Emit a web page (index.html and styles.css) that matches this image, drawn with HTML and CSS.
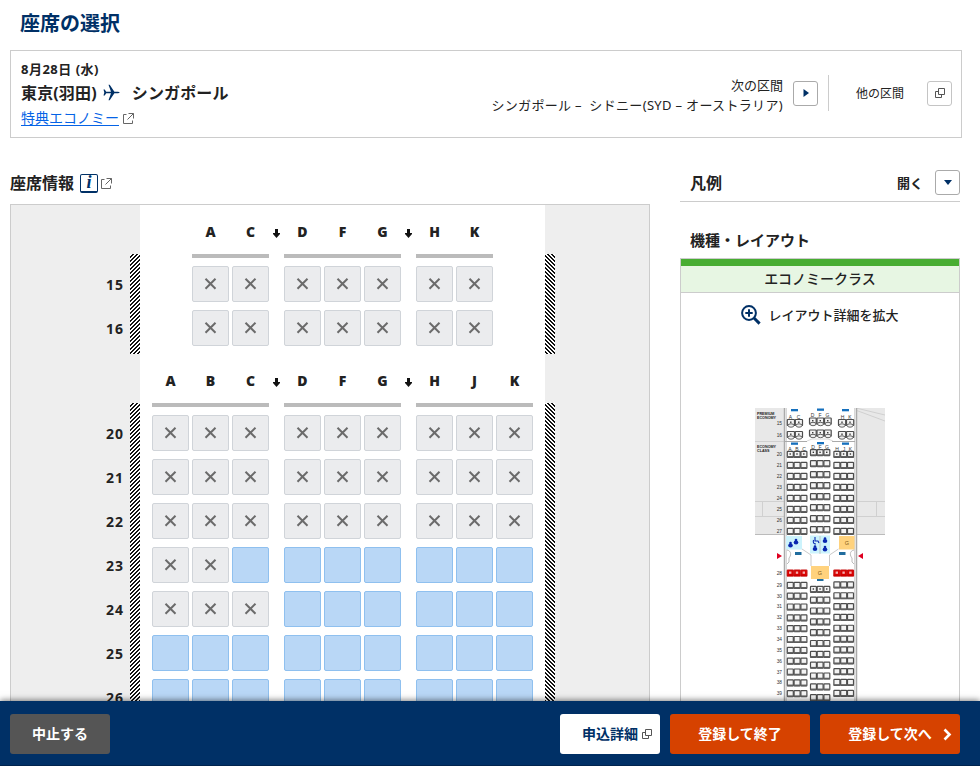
FILE: index.html
```html
<!DOCTYPE html>
<html lang="ja">
<head>
<meta charset="utf-8">
<title>座席の選択</title>
<link rel="stylesheet" href="styles.css">
</head>
<body>
<svg class="defs" width="0" height="0" aria-hidden="true">
  <symbol id="ext" viewBox="0 0 11 11"><path d="M3.500 1.500h-3v9h9v-3M5.500 .5h5v5M10.500 .5L4.500 6.500" fill="none" stroke="#666"/></symbol>
  <symbol id="win" viewBox="0 0 10 10"><path d="M3.500 .5h6v6h-6zM3.500 3.500h-3v6h6v-3" fill="none" stroke="#555"/></symbol>
</svg>
<main class="content">
  <h1>座席の選択</h1>
  <section class="flight">
    <div class="route">
      <p class="date">8月28日 (水)</p>
      <p class="cities"><span>東京(羽田)</span><svg class="plane" viewBox="0 0 17 17"><path d="M.5 5.500h1.200L3.200 7.800h4.800L5.500.8h1.200l4.700 7h3.400q1.600.2 1.900.7-.3.500-1.900.8h-3.400l-4.700 7H5.500L8 9.300H3.200L1.700 11.600H.5l.8-3.100z" fill="#003066"/></svg><span>シンガポール</span></p>
      <p class="fare"><a href="#">特典エコノミー</a><svg width="11" height="11"><use href="#ext"/></svg></p>
    </div>
    <div class="next"><p>次の区間</p><p class="segment">シンガポール –&nbsp; シドニー(SYD – オーストラリア)</p></div>
    <button class="square"><svg width="6" height="8"><path d="M.5 0l5.500 4L.5 8z" fill="#003066"/></svg></button>
    <div class="divider"></div>
    <span class="others">他の区間</span>
    <button class="square light"><svg width="10" height="10"><use href="#win"/></svg></button>
  </section>
  <div class="columns">
    <section class="seats">
      <h2>座席情報 <span class="info">i</span><svg width="11" height="11"><use href="#ext"/></svg></h2>
      <div class="map" id="map"></div>
    </section>
    <aside>
      <div class="legend"><h2>凡例</h2><span>開く</span><button class="square"><svg width="8" height="5"><path d="M0 0h8L4 5z" fill="#003066"/></svg></button></div>
      <h3>機種・レイアウト</h3>
      <div class="layout">
        <div class="cabin-class">エコノミークラス</div>
        <div class="enlarge"><svg width="20" height="20" viewBox="0 0 20 20"><g fill="none" stroke="#003066"><circle cx="8" cy="8" r="6.900" stroke-width="2"/><path d="M8 4.300v7.400M4.300 8h7.400" stroke-width="2"/><path d="M13 13l5.600 5.600" stroke-width="3"/></g></svg><span>レイアウト詳細を拡大</span></div>
        <svg class="plan" id="plan" width="130" height="293" viewBox="755 408 130 293"></svg>
      </div>
    </aside>
  </div>
</main>
<footer>
  <button class="cancel">中止する</button>
  <button class="details">申込詳細<svg width="10" height="10"><use href="#win"/></svg></button>
  <button class="primary">登録して終了</button>
  <button class="primary">登録して次へ<svg class="chevron" width="9" height="13"><path d="M1.500 1.500l5 5-5 5" fill="none" stroke="#fff" stroke-width="2.600"/></svg></button>
</footer>
<script src="seats.js"></script>
</body>
</html>
```
FILE: styles.css
```css
* { box-sizing: border-box; margin: 0; padding: 0; }
body { height: 766px; display: flex; flex-direction: column; overflow: hidden; background: #fff; color: #222; font: 13px/20px "Noto Sans", "Noto Sans CJK JP", sans-serif; }
.defs { position: absolute; }
button { font: inherit; }
.content { flex: 1; min-height: 0; overflow: hidden; padding: 0 18px 0 10px; }
h1 { height: 50px; padding: 10px 0 0 10px; font-size: 20px; line-height: 28px; color: #003066; }
.flight { display: flex; align-items: center; height: 88px; border: 1px solid #ccc; padding: 0 9px 2px 10px; }
.route { flex: 1; padding-top: 2px; }
.date { font-weight: bold; line-height: 21px; letter-spacing: .5px; }
.cities { display: flex; align-items: center; font-size: 16px; line-height: 26px; font-weight: bold; letter-spacing: .15px; }
.plane { width: 17px; height: 17px; margin: 0 12px 0 6px; }
.fare { display: flex; align-items: center; gap: 4px; font-size: 14px; line-height: 24px; }
.fare svg { margin-top: 2px; }
a { color: #0563e6; text-underline-offset: 2px; }
.next { text-align: right; margin-right: 10px; padding-top: 4px; }
.segment { white-space: nowrap; letter-spacing: .33px; }
.square { display: flex; align-items: center; justify-content: center; flex: none; width: 25px; height: 25px; background: #fff; border: 1px solid #aaa; border-radius: 3px; }
.square.light { border-color: #c4c4c4; }
.divider { width: 1px; height: 36px; margin: 0 27px 0 10px; background: #ccc; }
.others { width: 71px; padding-top: 2px; font-size: 12px; }
.columns { display: flex; gap: 30px; padding-top: 32px; }
.seats { width: 640px; }
h2 { font-size: 16px; line-height: 24px; }
.seats h2 { display: flex; align-items: center; height: 34px; padding-bottom: 8px; }
.info { width: 18px; height: 19px; margin: 0 3px 0 6px; border: 1px solid #003066; border-bottom-width: 2px; border-radius: 2px; font: italic bold 18px/14px "Liberation Serif", serif; text-align: center; color: #003066; }
.map { border: 1px solid #ccc; background: #eee; }
.block { display: grid; grid-template-columns: 119px 10px 405px 10px; grid-template-rows: 49px auto; }
.letters, .rows { grid-column: 3; padding: 0 12px; background: #fff; }
.letters { display: flex; align-items: center; padding-top: 4px; font-size: 14px; font-weight: bold; }
.group { display: flex; gap: 3px; width: 117px; }
.group.end { justify-content: flex-end; }
.group b { width: 37px; text-align: center; }
.aisle { width: 15px; display: flex; justify-content: center; padding-top: 4px; }
.numbers { grid-row: 2; grid-column: 1; padding: 12px 6px 0 0; text-align: right; font-size: 14px; font-weight: bold; letter-spacing: 1px; }
.numbers div { height: 44px; line-height: 38px; }
.hatch { grid-row: 2; grid-column: 2; background: url("data:image/svg+xml,%3Csvg xmlns='http://www.w3.org/2000/svg' width='4' height='4' shape-rendering='crispEdges'%3E%3Cpath fill='%23fff' d='M0 0h4v4H0z'/%3E%3Cpath fill='%23111' d='M2 0h2v1H2zM1 1h2v1H1zM0 2h2v1H0zM0 3h1v1H0zM3 3h1v1H3z'/%3E%3C/svg%3E"); }
.hatch.right { grid-column: 4; transform: scaleX(-1); }
.rows { grid-row: 2; }
.row { display: flex; gap: 15px; padding-bottom: 8px; }
.bar { height: 4px; background: #bbb; }
.rails { display: flex; gap: 15px; height: 12px; }
.short { width: 77px; }
.first.short { margin-left: 40px; }
.rails .bar { width: 117px; }
.rails .bar.short { width: 77px; }
.seat { display: flex; align-items: center; justify-content: center; width: 37px; height: 36px; border: 1px solid #d0d4d9; border-radius: 2px; background: #ebecee; }
.seat.open { background: #b9d7f6; border-color: #8fc0ef; }
aside { width: 280px; }
.legend { display: flex; align-items: center; height: 32px; border-bottom: 1px solid #ccc; padding: 0 0 6px 10px; }
.legend h2 { flex: 1; }
.legend span { font-weight: bold; margin-right: 12px; }
h3 { height: 56px; padding: 26px 0 0 10px; font-size: 15px; line-height: 24px; }
.layout { height: 480px; border: 1px solid #ccc; text-align: center; }
.cabin-class { height: 34px; border-top: 7px solid #48ad32; border-bottom: 1px solid #ccc; background: #e7f6e3; font-size: 14px; line-height: 26px; font-weight: 500; }
.enlarge { display: flex; justify-content: center; align-items: center; height: 44px; gap: 7px; font-weight: 500; }
.plan { display: block; margin: 71px auto 0 74px; }
footer { position: relative; display: flex; gap: 10px; height: 65px; padding: 13px 20px 0 10px; background: #003066; border-bottom: 1px solid #00244e; box-shadow: 0 -1px 6px rgba(0,0,0,.5); }
footer button { display: flex; align-items: center; justify-content: center; height: 40px; border: 0; border-radius: 3px; font-size: 14px; font-weight: bold; color: #fff; }
.cancel { width: 100px; margin-right: auto; background: #555; }
.details { width: 100px; padding-left: 14px; gap: 4px; background: #fff; }
footer .details { color: #003066; }
.primary { width: 140px; background: #d64200; }
.primary .chevron { margin: 0 -20px 0 11px; }
```
FILE: seats.js
```js
const cross = '<svg width="13" height="13"><path d="M1.500 .7l10 10M11.500 .7L1.500 10.700" stroke="#6b6b6b" stroke-width="2"/></svg>';
const arrow = '<div class="aisle"><svg width="7" height="9"><path d="M2 0h3v4h2v1L3.500 9 0 5V4h2z" fill="#111"/></svg></div>';

// x = taken, o = open; groups are separated by aisles
const blocks = [
  { letters: ['AC', 'DFG', 'HK'], rows: [[15, 'xx xxx xx'], [16, 'xx xxx xx']] },
  { letters: ['ABC', 'DFG', 'HJK'], rows: [
    [20, 'xxx xxx xxx'], [21, 'xxx xxx xxx'], [22, 'xxx xxx xxx'], [23, 'xxo ooo ooo'],
    [24, 'xxx ooo ooo'], [25, 'ooo ooo ooo'], [26, 'ooo ooo ooo']] }
];
const group = (items, i) => `<div class="group${i ? '' : ' end'}">${items}</div>`;
document.getElementById('map').innerHTML = blocks.map(b => {
  const letters = b.letters.map((g, i) => group([...g].map(c => `<b>${c}</b>`).join(''), i)).join(arrow);
  const rails = b.letters.map((g, i) => `<div class="bar${g.length < 3 ? ' short' : ''}${i ? '' : ' first'}"></div>`).join('');
  const rows = b.rows.map(r => `<div class="row">${r[1].split(' ').map((g, i) =>
    group([...g].map(c => c === 'x' ? `<div class="seat">${cross}</div>` : '<div class="seat open"></div>').join(''), i)).join('')}</div>`).join('');
  return `<div class="block"><div class="letters">${letters}</div>
    <div class="numbers">${b.rows.map(r => `<div>${r[0]}</div>`).join('')}</div>
    <div class="hatch"></div><div class="rows"><div class="rails">${rails}</div>${rows}</div><div class="hatch right"></div></div>`;
}).join('');

// Miniature cabin plan
let s = '';
const rect = (x, y, w, h, f, extra = '') => { s += `<rect x="${x}" y="${y}" width="${w}" height="${h}" fill="${f}" ${extra}/>`; };
const path = (d, c, f = 'none', w = 1) => { s += `<path d="${d}" stroke="${c}" fill="${f}" stroke-width="${w}"/>`; };
const text = (x, y, t, size = 5, anchor = 'middle', f = '#333', w = 400) => {
  s += `<text x="${x}" y="${y}" font-size="${size}" text-anchor="${anchor}" fill="${f}" font-weight="${w}" font-family="Liberation Sans">${t}</text>`;
};
const trio = (x, cy, n = 3, w = 6.800, red = false, dots = false) => {
  for (let i = 0; i < n; i++) {
    const l = x + i * w;
    rect(l + .5, cy - 3, w - .8, 6, red ? '#d00' : '#f4f4f4', `stroke="${red ? '#c81010' : '#4c4c4c'}" stroke-width="1.200" rx=".6"`);
    rect(l + .3, cy + 1.700, w - .6, 1.600, red ? '#c00' : '#606060');
    if (red) { rect(l + 2.200, cy - 1.500, w - 4.400, 2.300, '#f3b0b0'); }
    if (dots) { rect(l + w / 2 - .7, cy - 1, 1.400, 1.400, '#333'); }
  }
};
rect(755, 408, 130, 127, '#e8e8e8');
path('M755 441.500h30M755 501.500h30M755 516.500h30M762.500 501v16M856 501.500h29M856 516.500h29M876.500 501v16M850 408l35 13M856 408l29 7', '#d0d0d0');
path('M755 534.500h30M856 534.500h29', '#bbb');
rect(784, 408, 73, 300, '#f4f4f4');
rect(787, 408, 67, 300, '#fff');
path('M784.500 408v300M856.500 408v300', '#aaa', 'none', 1.500);
path('M786.500 408v300M854.500 408v300', '#d8d8d8');
path('M785 441.500h22M832 441.500h23', '#aaa');
path('M807 441l5-2h16l5 2', '#ccc', 'none', .7);
[['PREMIUM', 414.500], ['ECONOMY', 418.500], ['ECONOMY', 447.500], ['CLASS', 451.500]].forEach(t => text(757, t[1], t[0], 3.700, 'start', '#222', 700));
[[791, 409], [817, 408.500], [842, 409], [791, 442.500], [817, 442], [842, 442.500]].forEach(p => rect(p[0], p[1], 7, 2.300, '#1670bd'));
[['A', 790.500, 418.500], ['C', 798.500, 418.500], ['D', 812.500, 416.500], ['F', 820, 416.500], ['G', 827.500, 416.500], ['H', 842.500, 418.500], ['K', 850, 418.500],
 ['A', 790, 450.500], ['B', 797, 450.500], ['C', 804, 450.500], ['D', 813, 448.500], ['F', 820, 448.500], ['G', 827, 448.500], ['H', 837, 450.500], ['J', 844, 450.500], ['K', 850.500, 450.500]
].forEach(l => text(l[1], l[2], l[0]));
[[15, 422.500], [16, 434.500]].forEach(([n, y]) => {
  text(782, y + 2, n, 4.800, 'end');
  trio(786.800, y, 2, 8, false, true); trio(809, y - 1.500, 3, 7.500, false, true); trio(838, y, 2, 8, false, true);
  for (const x of [791, 799, 813, 820.500, 828, 842, 850]) s += `<ellipse cx="${x}" cy="${y + (x > 810 && x < 830 ? 1.500 : 3)}" rx="3" ry="1.700" fill="#eee" stroke="#555" stroke-width=".9"/>`;
});
for (let n = 20; n < 28; n++) {
  const y = 454.300 + (n - 20) * 11;
  text(782, y + 2, n, 4.800, 'end');
  trio(786.800, y, 3, 6.800, false, n === 20); trio(810, y - 1.700, 3, 6.700, false, n === 20); trio(833.400, y, 3, 6.800, false, n === 20);
}
rect(786, 536, 16, 13.500, '#ccf3fc');
rect(810, 535.500, 20, 18, '#ccf3fc');
rect(839, 536, 15.500, 13.500, '#ffd27d');
rect(811, 566, 18, 13, '#ffd27d');
text(847, 545, 'G', 5.500, 'middle', '#865c20'); text(820, 574.500, 'G', 5.500, 'middle', '#865c20');
path('M820 536v18M802 549l9 6v11M838.500 549l-9 6v11', '#bbb', 'none', .8);
path('M787 550c5 1 4 6 2 8v4l-2 2M854 550c-5 1-4 6-2 8v4l2 2', '#aaa', 'none', .8);
[[790.500, 544.500], [796, 541.500], [815, 548], [825, 540], [825, 548.500]].forEach(([x, y]) => {
  s += `<circle cx="${x}" cy="${y - 1.500}" r="1.300" fill="#0928b0"/><ellipse cx="${x}" cy="${y + 1}" rx="2.300" ry="2" fill="#0928b0"/>`;
});
path('M815 537v4h3l1 2M813.500 540q-1 4 2.500 4', '#0928b0', 'none', 1.100);
rect(795, 552, 6.500, 3, '#216d9e'); rect(839, 552, 6.500, 3, '#216d9e'); rect(817, 579, 6.500, 2, '#216d9e');
path('M777 553l5 3-5 3zM863 553l-5 3 5 3z', 'none', '#df0020');
text(782, 575, 28, 4.800, 'end');
trio(786.800, 573, 3, 6.800, true); trio(833.400, 573, 3, 6.800, true);
for (let n = 29; n < 40; n++) {
  const y = 585.300 + (n - 29) * 10.840;
  text(782, y + 1.500, n, 4.800, 'end');
  trio(786.800, y, 3); trio(833.400, y - .4, 3); trio(810, y + 4, 3, 6.700, false, n === 29);
}
document.getElementById('plan').innerHTML = s;
```
